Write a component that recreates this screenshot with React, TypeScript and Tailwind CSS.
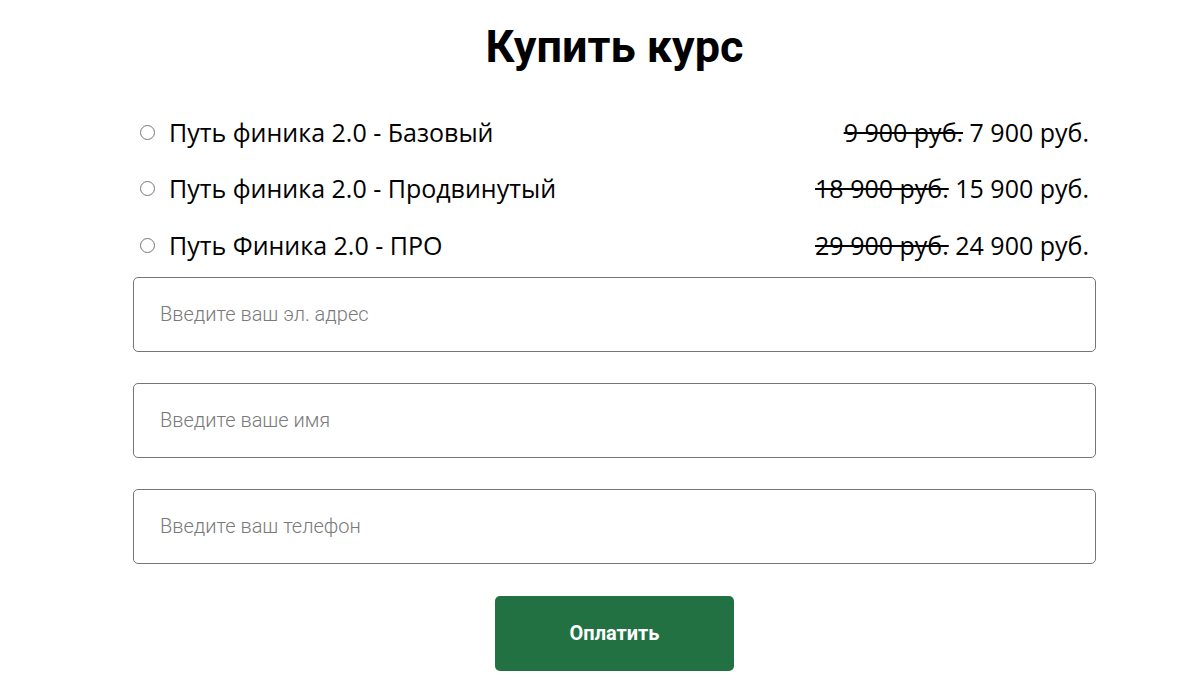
const options = [
  { name: "Путь финика 2.0 - Базовый", old: "9 900 руб.", price: "7 900 руб." },
  { name: "Путь финика 2.0 - Продвинутый", old: "18 900 руб.", price: "15 900 руб." },
  { name: "Путь Финика 2.0 - ПРО", old: "29 900 руб.", price: "24 900 руб." },
];

const fields = ["Введите ваш эл. адрес", "Введите ваше имя", "Введите ваш телефон"];

export default function App() {
  return (
    <div className="min-h-screen bg-white">
      <div className="ml-[133px] w-[963px] pt-[20px]">
        <h1 className="text-center text-[45px] leading-[54px] font-bold text-black" style={{ fontFamily: "Roboto, sans-serif" }}>
          Купить курс
        </h1>

        <div className="mt-[30px] pl-[7px] pr-[7px]" style={{ fontFamily: '"Open Sans", sans-serif' }}>
          {options.map((o) => (
            <label key={o.name} className="flex items-center justify-between h-[56.5px] text-[25px] text-black">
              <span className="flex items-center">
                <span className="w-[15px] h-[15px] rounded-full border border-[#767676] bg-white mr-[14px]" />
                {o.name}
              </span>
              <span>
                <s>{o.old}</s> {o.price}
              </span>
            </label>
          ))}
        </div>

        <div className="mt-[3px] flex flex-col gap-[31px]" style={{ fontFamily: "Roboto, sans-serif" }}>
          {fields.map((f) => (
            <input
              key={f}
              placeholder={f}
              className="h-[75px] w-full rounded-[5px] border border-[#767676] px-[26px] text-[20px] font-light placeholder:text-[#7a7a7a] outline-none"
            />
          ))}
        </div>

        <div className="mt-[32px] flex justify-center" style={{ fontFamily: "Roboto, sans-serif" }}>
          <button className="w-[239px] h-[75px] rounded-[5px] bg-[#217142] text-white text-[20px] font-bold">
            Оплатить
          </button>
        </div>
      </div>
    </div>
  );
}
